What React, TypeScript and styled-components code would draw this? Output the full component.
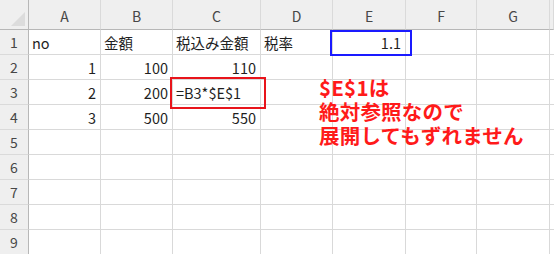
import React from "react";
import styled, { createGlobalStyle } from "styled-components";

const GlobalStyle = createGlobalStyle`
  html, body {
    margin: 0;
    padding: 0;
    background: #ffffff;
  }
  body {
    font-family: "Noto Sans CJK JP", "Noto Sans", sans-serif;
  }
`;

const colWidths = [29, 72, 72, 88, 72, 73, 71, 73, 4];
const letters = ["A", "B", "C", "D", "E", "F", "G", ""];

type CellValue = { text: string; align?: "left" | "right" };

const rows: CellValue[][] = [
  [{ text: "no" }, { text: "金額" }, { text: "税込み金額" }, { text: "税率" }, { text: "1.1", align: "right" }],
  [{ text: "1", align: "right" }, { text: "100", align: "right" }, { text: "110", align: "right" }],
  [{ text: "2", align: "right" }, { text: "200", align: "right" }, { text: "=B3*$E$1" }],
  [{ text: "3", align: "right" }, { text: "500", align: "right" }, { text: "550", align: "right" }],
  [],
  [],
  [],
  [],
  [],
];

const Sheet = styled.div`
  position: relative;
  width: 554px;
  height: 254px;
  overflow: hidden;
  display: grid;
  grid-template-columns: ${colWidths.map((w) => `${w}px`).join(" ")};
  grid-template-rows: 30px repeat(9, 25px);
`;

const Corner = styled.div`
  background: #efefef;
  border-right: 1px solid #b7b7b7;
  border-bottom: 1px solid #b7b7b7;
  display: flex;
  align-items: flex-end;
  justify-content: flex-end;
  padding: 0 3px 3px 0;
  box-sizing: border-box;
`;

const ColHead = styled.div`
  background: #efefef;
  border-right: 1px solid #dadada;
  border-bottom: 1px solid #b7b7b7;
  box-sizing: border-box;
  display: flex;
  align-items: center;
  justify-content: center;
  font-size: 14px;
  color: #474747;
  padding-top: 2px;
`;

const RowHead = styled.div`
  background: #efefef;
  border-right: 1px solid #b7b7b7;
  border-bottom: 1px solid #dadada;
  box-sizing: border-box;
  display: flex;
  align-items: center;
  justify-content: center;
  font-size: 14px;
  color: #474747;
`;

const Cell = styled.div<{ $align?: "left" | "right"; $mark?: "red" | "blue" }>`
  position: relative;
  z-index: ${(p) => (p.$mark ? 1 : "auto")};
  border-right: 1px solid #d9d9d9;
  border-bottom: 1px solid #d9d9d9;
  box-sizing: border-box;
  display: flex;
  align-items: center;
  justify-content: ${(p) => (p.$align === "right" ? "flex-end" : "flex-start")};
  padding: 1px 4px 0 3px;
  font-size: 14.5px;
  color: #1f1f1f;
  white-space: nowrap;
  overflow: visible;

  ${(p) =>
    p.$mark === "blue" &&
    `
    &::after {
      content: "";
      position: absolute;
      left: -3px;
      top: 0;
      right: -7px;
      bottom: -2px;
      border: 2px solid #1a1aff;
    }
  `}

  ${(p) =>
    p.$mark === "red" &&
    `
    &::after {
      content: "";
      position: absolute;
      left: -3px;
      top: -3px;
      right: -6px;
      bottom: -5px;
      border: 2px solid #e8141b;
    }
  `}
`;

const Note = styled.div`
  position: absolute;
  z-index: 2;
  left: 319px;
  top: 75px;
  font-size: 20.5px;
  line-height: 24px;
  font-weight: 700;
  color: #ff1a1a;
  letter-spacing: 0.2px;
`;

const markFor = (r: number, c: number): "red" | "blue" | undefined => {
  if (r === 0 && c === 4) return "blue";
  if (r === 2 && c === 2) return "red";
  return undefined;
};

export default function App() {
  return (
    <>
      <GlobalStyle />
      <Sheet>
        <Corner>
          <svg width="14" height="14" viewBox="0 0 14 14">
            <polygon points="14,0 14,14 0,14" fill="#dcdcdc" />
          </svg>
        </Corner>
        {letters.map((l, i) => (
          <ColHead key={i}>{l}</ColHead>
        ))}
        {rows.map((row, r) => (
          <React.Fragment key={r}>
            <RowHead>{r + 1}</RowHead>
            {letters.map((_, c) => {
              const v = row[c];
              return (
                <Cell key={c} $align={v?.align} $mark={markFor(r, c)}>
                  {v?.text}
                </Cell>
              );
            })}
          </React.Fragment>
        ))}
        <Note>
          $E$1は
          <br />
          絶対参照なので
          <br />
          展開してもずれません
        </Note>
      </Sheet>
    </>
  );
}
